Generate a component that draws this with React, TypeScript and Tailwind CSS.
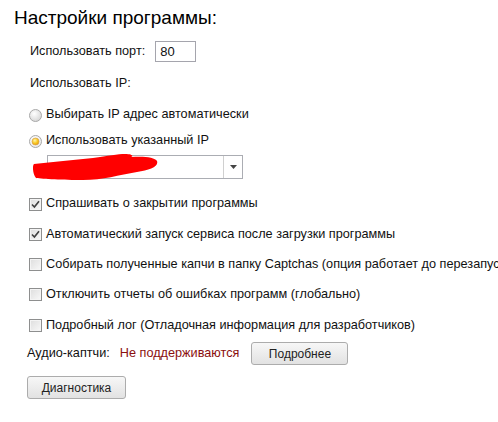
import React from 'react';

function Radio({ checked }: { checked?: boolean }) {
  return (
    <svg width="13" height="13" viewBox="0 0 13 13" className="shrink-0">
      <defs>
        <radialGradient id={checked ? 'rg-on' : 'rg-off'} cx="40%" cy="35%" r="70%">
          <stop offset="0%" stopColor="#ffffff" />
          <stop offset="100%" stopColor={checked ? '#e9e9e9' : '#d4d4d4'} />
        </radialGradient>
        <radialGradient id="dot" cx="40%" cy="35%" r="70%">
          <stop offset="0%" stopColor="#fff6a8" />
          <stop offset="60%" stopColor="#f7c51c" />
          <stop offset="100%" stopColor="#e59a12" />
        </radialGradient>
      </defs>
      <circle cx="6.5" cy="6.5" r="6" fill={`url(#${checked ? 'rg-on' : 'rg-off'})`} stroke="#a8a8a8" />
      {checked && <circle cx="6.5" cy="6.5" r="3.5" fill="url(#dot)" stroke="#d9a04a" strokeWidth="0.7" />}
    </svg>
  );
}

function Check({ checked }: { checked?: boolean }) {
  return (
    <span className="shrink-0 w-[13px] h-[13px] border border-[#8e8f8f] bg-[#f4f4f4] flex items-center justify-center">
      <span className="w-[9px] h-[9px] bg-gradient-to-br from-[#e0e0e0] to-[#f6f6f6] flex items-center justify-center">
        {checked && (
          <svg width="9" height="9" viewBox="0 0 9 9">
            <path d="M1 4.5 L3.4 7 L8 1.2" fill="none" stroke="#3f3f3f" strokeWidth="1.6" />
          </svg>
        )}
      </span>
    </span>
  );
}

function Btn({ children, className }: { children: React.ReactNode; className?: string }) {
  return (
    <button
      className={`h-[23px] border border-[#acacac] rounded-[3px] bg-gradient-to-b from-[#f7f7f7] to-[#e2e2e2] text-[#222] text-[12px] leading-none ${className ?? ''}`}
    >
      {children}
    </button>
  );
}

const checks: [boolean, string][] = [
  [true, 'Спрашивать о закрытии программы'],
  [true, 'Автоматический запуск сервиса после загрузки программы'],
  [false, 'Собирать полученные капчи в папку Captchas (опция работает до перезапуска программы)'],
  [false, 'Отключить отчеты об ошибках программ (глобально)'],
  [false, 'Подробный лог (Отладочная информация для разработчиков)'],
];

export default function App() {
  return (
    <div
      className="w-[498px] h-[422px] bg-white overflow-hidden text-[12.7px] text-[#111]"
      style={{ fontFamily: '"Liberation Sans", Arial, sans-serif' }}
    >
      <h1 className="pl-[14px] pt-[6px] h-[34px] text-[19px] leading-[24px] text-black">Настройки программы:</h1>

      <div className="pl-[30px] flex items-center h-[23px] mt-[6px]">
        <span>Использовать порт:</span>
        <input
          defaultValue="80"
          className="ml-[10px] w-[41px] h-[21px] border border-[#a5a5ad] px-[4px] text-[13px] outline-none"
        />
      </div>

      <div className="pl-[30px] h-[16px] leading-[16px] mt-[12px]">Использовать IP:</div>

      <div className="pl-[29px] flex items-center gap-[4px] h-[16px] mt-[16px]">
        <Radio />
        <span>Выбирать IP адрес автоматически</span>
      </div>
      <div className="pl-[29px] flex items-center gap-[4px] h-[16px] mt-[10px]">
        <Radio checked />
        <span>Использовать указанный IP</span>
      </div>

      <div className="relative ml-[47px] mt-[6px] w-[196px] h-[24px] border border-[#abadb3] bg-white flex justify-end">
        <span className="w-[19px] h-full border-l border-[#d0d0d0] flex items-center justify-center">
          <svg width="7" height="4" viewBox="0 0 7 4">
            <path d="M0 0 H7 L3.5 4 Z" fill="#444" />
          </svg>
        </span>
        <svg className="absolute left-[-15px] top-[-2px]" width="126" height="27" viewBox="0 0 126 27">
          <path
            d="M1 10 C20 8 40 6 60 4 C75 2 85 0 92 0 C99 0 101 2 98 3 C110 2 122 3 124 7 C126 13 116 16 104 18 C86 21 70 26 50 26 C30 26 10 25 3 24 C0 21 -1 12 1 10 Z"
            fill="#ff0000"
          />
        </svg>
      </div>

      <div className="flex flex-col gap-[14.3px] mt-[17px]">
        {checks.map(([c, t], i) => (
          <div key={i} className="pl-[29px] flex items-center gap-[4px] h-[16px] whitespace-nowrap">
            <Check checked={c} />
            <span>{t}</span>
          </div>
        ))}
      </div>

      <div className="pl-[27px] flex items-center h-[23px] mt-[9px] whitespace-nowrap">
        <span>Аудио-каптчи:</span>
        <span className="ml-[10px] text-[#8b0f0f]">Не поддерживаются</span>
        <Btn className="ml-[12px] w-[97px]">Подробнее</Btn>
      </div>

      <div className="pl-[27px] mt-[11px]">
        <Btn className="w-[99px] text-[11px]">Диагностика</Btn>
      </div>
    </div>
  );
}
